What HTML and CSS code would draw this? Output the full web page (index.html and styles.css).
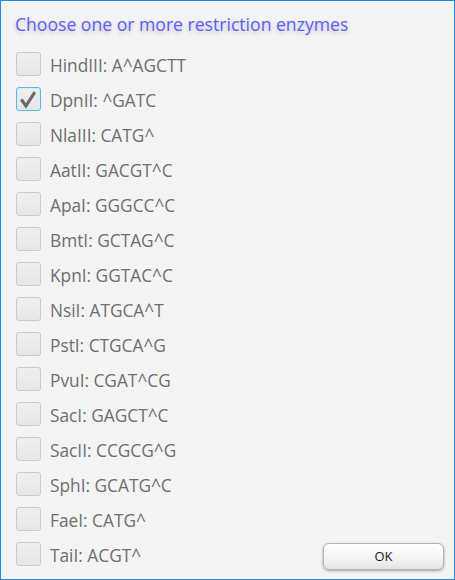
FILE: index.html
```html
<!DOCTYPE html>
<html>
<head>
<meta charset="utf-8">
<link rel="stylesheet" href="styles.css">
</head>
<body>
<div class="window">
  <h1 class="title">Choose one or more restriction enzymes</h1>
  <ul class="list">
    <li class="row"><span class="box"></span><span class="label">HindIII: A^AGCTT</span></li>
    <li class="row"><span class="box checked"><svg viewBox="0 0 24 24" width="24" height="24"><path d="M4.5 12.5 L9.3 19.3 L18.6 4.8" fill="none" stroke="#6c6c6c" stroke-width="3.3" stroke-linecap="butt" stroke-linejoin="miter"/></svg></span><span class="label">DpnII: ^GATC</span></li>
    <li class="row"><span class="box"></span><span class="label">NlaIII: CATG^</span></li>
    <li class="row"><span class="box"></span><span class="label">AatII: GACGT^C</span></li>
    <li class="row"><span class="box"></span><span class="label">ApaI: GGGCC^C</span></li>
    <li class="row"><span class="box"></span><span class="label">BmtI: GCTAG^C</span></li>
    <li class="row"><span class="box"></span><span class="label">KpnI: GGTAC^C</span></li>
    <li class="row"><span class="box"></span><span class="label">NsiI: ATGCA^T</span></li>
    <li class="row"><span class="box"></span><span class="label">PstI: CTGCA^G</span></li>
    <li class="row"><span class="box"></span><span class="label">PvuI: CGAT^CG</span></li>
    <li class="row"><span class="box"></span><span class="label">SacI: GAGCT^C</span></li>
    <li class="row"><span class="box"></span><span class="label">SacII: CCGCG^G</span></li>
    <li class="row"><span class="box"></span><span class="label">SphI: GCATG^C</span></li>
    <li class="row"><span class="box"></span><span class="label">FaeI: CATG^</span></li>
    <li class="row"><span class="box"></span><span class="label">TaiI: ACGT^</span><button class="ok">OK</button></li>
  </ul>
</div>
</body>
</html>
```

FILE: styles.css
```css
html, body {
  margin: 0;
  padding: 0;
  background: #f4f4f4;
}
.window {
  box-sizing: border-box;
  width: 455px;
  height: 580px;
  border: 1px solid #1e88e5;
  padding: 11px 10px 0 14px;
  background: #f4f4f4;
  font-family: "Open Sans", sans-serif;
}
.title {
  margin: 0;
  font-size: 17.6px;
  line-height: 24px;
  font-weight: 400;
  color: #5f5ff7;
  text-shadow: 0 2px 4px rgba(0, 0, 0, 0.22);
}
.list {
  list-style: none;
  margin: 16px 0 0 1px;
  padding: 0;
  display: flex;
  flex-direction: column;
  gap: 11px;
}
.row {
  display: flex;
  align-items: center;
  height: 24px;
  gap: 9px;
}
.box {
  box-sizing: border-box;
  width: 25px;
  height: 24px;
  flex: none;
  border: 1px solid #cbcbcb;
  border-radius: 3px;
  background: linear-gradient(#efefef, #e6e6e6);
  display: flex;
  align-items: center;
  justify-content: center;
}
.box.checked {
  border-color: #5db7e6;
  box-shadow: inset 0 0 0 1px #d7eef9;
}
.box svg {
  display: block;
}
.label {
  font-size: 17.3px;
  color: #6e6e6e;
  padding-top: 2px;
}
.ok {
  margin-left: auto;
  margin-top: 4px;
  width: 121px;
  height: 27px;
  border: 1px solid #b4b4b4;
  border-radius: 6px;
  background: linear-gradient(#ffffff, #f3f3f3 60%, #e4e4e4);
  box-shadow: 0 1px 3px rgba(0, 0, 0, 0.35);
  font-family: "Open Sans", sans-serif;
  font-size: 13px;
  color: #1a1a1a;
  padding: 0;
}
```
